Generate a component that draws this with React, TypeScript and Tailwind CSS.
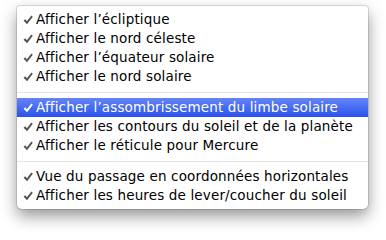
import React from 'react';

type Item = { label: string; checked: boolean; active?: boolean } | 'sep';

const items: Item[] = [
  { label: 'Afficher l’écliptique', checked: true },
  { label: 'Afficher le nord céleste', checked: true },
  { label: 'Afficher l’équateur solaire', checked: true },
  { label: 'Afficher le nord solaire', checked: true },
  'sep',
  { label: 'Afficher l’assombrissement du limbe solaire', checked: true, active: true },
  { label: 'Afficher les contours du soleil et de la planète', checked: true },
  { label: 'Afficher le réticule pour Mercure', checked: true },
  'sep',
  { label: 'Vue du passage en coordonnées horizontales', checked: true },
  { label: 'Afficher les heures de lever/coucher du soleil', checked: true },
];

function Check({ active }: { active?: boolean }) {
  return (
    <svg width="10" height="10" viewBox="0 0 11 11" className="absolute left-[6px] top-[5px]">
      <path
        d="M0.6 6.2 L2.5 4.6 L4.3 6.9 L9.2 0.6 L10.8 1.9 L4.5 10.2 Z"
        fill={active ? '#ffffff' : '#555555'}
      />
    </svg>
  );
}

export default function App() {
  return (
    <div className="w-[386px] h-[237px] bg-white pt-[6px] pl-[17px]">
      <div
        className="w-[351px] bg-white rounded-b-[5px] rounded-t-[3px] pt-[4px] pb-[4px] shadow-[0_7px_16px_rgba(0,0,0,0.42),0_0_0_1px_rgba(0,0,0,0.12)]"
        style={{ fontFamily: '"DejaVu Sans", "Liberation Sans", sans-serif' }}
      >
        {items.map((it, i) =>
          it === 'sep' ? (
            <div key={i} className="h-[12px] pt-[6px]">
              <div className="h-px bg-[#e3e3e3]" />
            </div>
          ) : (
            <div
              key={i}
              className={
                it.active
                  ? 'relative h-[19px] pl-[19px] flex items-center text-[13.5px] tracking-[0.15px] text-white bg-gradient-to-b from-[#6684f6] to-[#2a51ec]'
                  : 'relative h-[19px] pl-[19px] flex items-center text-[13.5px] tracking-[0.15px] text-black'
              }
            >
              {it.checked && <Check active={it.active} />}
              <span className="whitespace-nowrap">{it.label}</span>
            </div>
          )
        )}
      </div>
    </div>
  );
}
